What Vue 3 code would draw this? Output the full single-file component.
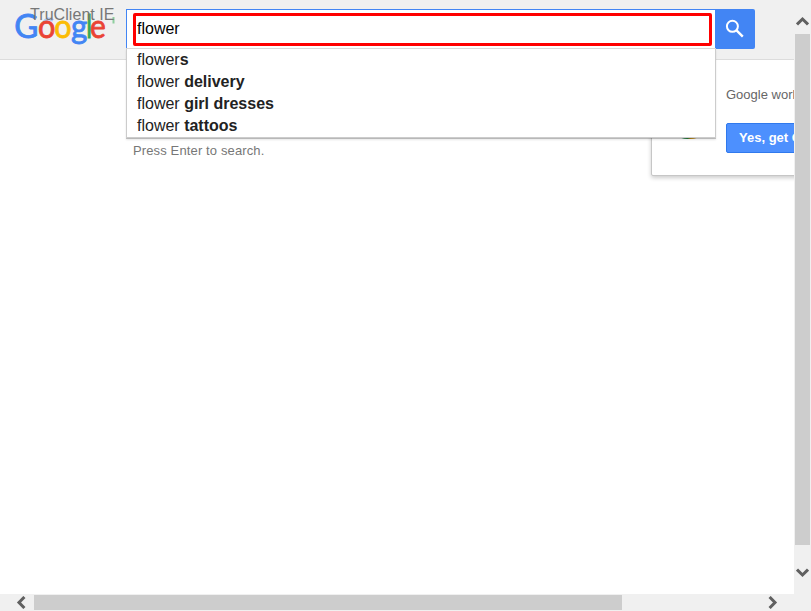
<script setup>
import { ref } from 'vue'

const query = ref('flower')
const suggestions = [
  { typed: 'flower', rest: 's' },
  { typed: 'flower ', rest: 'delivery' },
  { typed: 'flower ', rest: 'girl dresses' },
  { typed: 'flower ', rest: 'tattoos' },
]
const letters = [
  { ch: 'G', x: -0.8, w: 24.2, color: '#4285f4' },
  { ch: 'o', x: 23.1, w: 17.4, color: '#ea4335' },
  { ch: 'o', x: 39.3, w: 17.4, color: '#fbbc05' },
  { ch: 'g', x: 56, w: 16.4, color: '#4285f4' },
  { ch: 'l', x: 71.2, w: 5.8, color: '#34a853' },
  { ch: 'e', x: 75, w: 15.8, color: '#ea4335' },
]
</script>

<template>
  <div class="window">
    <div class="viewport">
      <header class="header">
        <div class="brand">
          <svg class="logo" width="106" height="48" viewBox="0 0 106 48">
            <path d="M28.5 22.5 Q33 16.5 38 20.5" fill="none" stroke="#abc8f8" stroke-width="3" />
            <path d="M98.5 17v6.5" stroke="#8fcf9f" stroke-width="2" />
            <text
              v-for="(l, i) in letters"
              :key="i"
              :x="l.x"
              y="38.2"
              :fill="l.color"
              :stroke="l.color"
              :textLength="l.w"
              lengthAdjust="spacingAndGlyphs"
            >{{ l.ch }}</text>
          </svg>
          <span class="watermark">TruClient IE</span>
        </div>
        <form class="search" @submit.prevent>
          <div class="field">
            <input v-model="query" class="query" type="text" />
          </div>
          <button class="go" type="submit">
            <svg width="20" height="20" viewBox="0 0 20 20">
              <circle cx="7.4" cy="7.3" r="5.5" fill="none" stroke="#fff" stroke-width="2" />
              <path d="M11.3 11.2L17.8 17.7" stroke="#fff" stroke-width="2.4" />
            </svg>
          </button>
          <ul class="suggestions">
            <li v-for="s in suggestions" :key="s.rest">{{ s.typed }}<b>{{ s.rest }}</b></li>
          </ul>
        </form>
      </header>
      <main class="body">
        <p class="hint">Press Enter to search.</p>
        <aside class="promo">
          <i class="promo-icon"></i>
          <p>Google works better with Chrome</p>
          <button type="button">Yes, get Google Chrome</button>
        </aside>
      </main>
    </div>
    <div class="vbar">
      <svg class="up" width="13" height="10" viewBox="0 0 13 10"><path d="M1 8.4L6.5 3L12 8.4" /></svg>
      <i class="vthumb"></i>
      <svg class="down" width="13" height="10" viewBox="0 0 13 10"><path d="M1 1.6L6.5 7L12 1.6" /></svg>
    </div>
    <div class="hbar">
      <svg class="left" width="10" height="13" viewBox="0 0 10 13"><path d="M8.4 1L3 6.5L8.4 12" /></svg>
      <i class="hthumb"></i>
      <svg class="right" width="10" height="13" viewBox="0 0 10 13"><path d="M1.6 1L7 6.5L1.6 12" /></svg>
    </div>
  </div>
</template>

<style>
body {
  margin: 0;
  overflow: hidden;
}
</style>

<style scoped>
* {
  box-sizing: border-box;
}
.window {
  display: grid;
  grid-template: 594px 17px / 794px 17px;
  width: 811px;
  height: 611px;
  background: #f0f0f0;
  font-family: "Liberation Sans", Arial, sans-serif;
}
.viewport {
  overflow: hidden;
  background: #fff;
}
.header {
  position: relative;
  z-index: 2;
  display: flex;
  height: 60px;
  background: #f0f0f0;
  border-bottom: 1px solid #dcdcdc;
}
.brand {
  position: relative;
  width: 126px;
  padding-left: 15px;
}
.logo {
  display: block;
  overflow: visible;
}
.logo text {
  font: 32px Lato, sans-serif;
  stroke-width: 0.8px;
}
.watermark {
  position: absolute;
  left: 30px;
  top: 6px;
  font-size: 16px;
  line-height: 18px;
  letter-spacing: 0.06px;
  color: #777;
  white-space: nowrap;
}
.search {
  position: relative;
  display: flex;
  margin-top: 9px;
  height: 40px;
}
.field {
  width: 589px;
  height: 40px;
  padding: 3px 3px 3px 6px;
  background: #fff;
  border: 1px solid #4285f4;
  border-right: 0;
}
.query {
  display: block;
  width: 579px;
  height: 33px;
  padding: 0 1px 2px;
  border: 3px solid #f00;
  border-radius: 2px;
  outline: 0;
  background: #fff;
  color: #000;
  font: 16px "Liberation Sans", Arial, sans-serif;
}
.go {
  display: flex;
  align-items: center;
  justify-content: center;
  width: 40px;
  height: 40px;
  padding: 0;
  border: 0;
  border-radius: 0 2px 2px 0;
  background: #4285f4;
}
.suggestions {
  position: absolute;
  left: 0;
  top: 39px;
  width: 590px;
  height: 90px;
  margin: 0;
  padding: 0 10px;
  list-style: none;
  background: #fff;
  border: 1px solid #ccc;
  border-top-color: #d9d9d9;
  box-shadow: 0 1px 0 rgba(0, 0, 0, 0.2), 0 2px 2px rgba(0, 0, 0, 0.1);
  font-size: 16px;
  line-height: 22px;
  color: #222;
}
.suggestions li {
  height: 22px;
  white-space: pre;
}
.body {
  display: flex;
  align-items: flex-start;
}
.hint {
  width: 651px;
  flex: none;
  margin: 0;
  padding: 83px 0 0 133px;
  font-size: 13px;
  line-height: 16px;
  letter-spacing: 0.13px;
  color: #777;
}
.promo {
  display: grid;
  grid-template: 63px 1fr / 74px 1fr;
  flex: none;
  width: 330px;
  height: 117px;
  margin-top: -1px;
  background: #fff;
  border: 1px solid #c6c6c6;
  border-radius: 2px;
  box-shadow: 0 2px 4px rgba(0, 0, 0, 0.2);
  font-size: 13px;
  color: #666;
}
.promo-icon {
  grid-row: 1 / 3;
  width: 34px;
  height: 32px;
  margin: 47px 0 0 20px;
  border-radius: 45%;
  background: linear-gradient(90deg, #23904a 0 45%, #d89b16 55%);
}
.promo p {
  margin: 27px 0 0;
  line-height: 16px;
  white-space: nowrap;
}
.promo button {
  width: 180px;
  height: 30px;
  padding: 0 12px 2px;
  border: 1px solid #3079ed;
  border-radius: 2px;
  background: #4d90fe;
  color: #fff;
  font: bold 13px "Liberation Sans", Arial, sans-serif;
  text-align: left;
  white-space: nowrap;
}
.vbar,
.hbar {
  display: flex;
  align-items: center;
}
.vbar {
  flex-direction: column;
}
.vbar svg,
.hbar svg {
  flex: none;
  fill: none;
  stroke: #606060;
  stroke-width: 3;
}
.up {
  margin-top: 16px;
}
.vthumb {
  width: 15px;
  height: 511px;
  margin-top: 8px;
  background: #cdcdcd;
}
.down {
  margin-top: 23px;
}
.left {
  margin-left: 16px;
}
.hthumb {
  width: 588px;
  height: 15px;
  margin-left: 8px;
  background: #cdcdcd;
}
.right {
  margin-left: 146px;
}
</style>
